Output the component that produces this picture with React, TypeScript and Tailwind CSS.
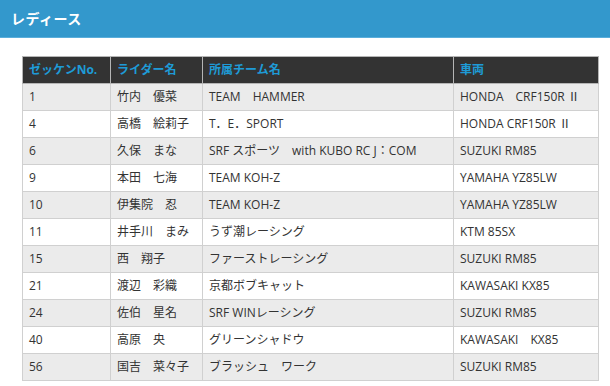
import React from "react";

const rows: [string, string, string, string][] = [
  ["1", "竹内　優菜", "TEAM　HAMMER", "HONDA　CRF150R Ⅱ"],
  ["4", "高橋　絵莉子", "T．E．SPORT", "HONDA CRF150R Ⅱ"],
  ["6", "久保　まな", "SRF スポーツ　with KUBO RC J：COM", "SUZUKI RM85"],
  ["9", "本田　七海", "TEAM KOH-Z", "YAMAHA YZ85LW"],
  ["10", "伊集院　忍", "TEAM KOH-Z", "YAMAHA YZ85LW"],
  ["11", "井手川　まみ", "うず潮レーシング", "KTM 85SX"],
  ["15", "西　翔子", "ファーストレーシング", "SUZUKI RM85"],
  ["21", "渡辺　彩織", "京都ボブキャット", "KAWASAKI KX85"],
  ["24", "佐伯　星名", "SRF WINレーシング", "SUZUKI RM85"],
  ["40", "高原　央", "グリーンシャドウ", "KAWASAKI　KX85"],
  ["56", "国吉　菜々子", "ブラッシュ　ワーク", "SUZUKI RM85"],
];

export default function App() {
  return (
    <div
      className="w-[610px] h-[386px] bg-white overflow-hidden"
      style={{ fontFamily: "'Open Sans', 'Noto Sans CJK JP', sans-serif" }}
    >
      <div className="h-[38px] bg-[#3398cc] border-b border-[#5aaedb] flex items-center pl-[11px]">
        <h1 className="text-white font-bold text-[14px] tracking-[0.5px]">レディース</h1>
      </div>
      <div className="pt-[18px] pl-[22px]">
        <table className="border-collapse table-fixed w-[576px] text-[12px] text-[#333]">
          <colgroup>
            <col className="w-[88px]" />
            <col className="w-[92px]" />
            <col className="w-[251px]" />
            <col className="w-[145px]" />
          </colgroup>
          <thead>
            <tr className="bg-[#333333] h-[27px]">
              {["ゼッケンNo.", "ライダー名", "所属チーム名", "車両"].map((h) => (
                <th
                  key={h}
                  className="text-left font-bold text-[#1e9bd7] px-[6px] border border-[#b5b5b5] p-0 leading-none"
                >
                  {h}
                </th>
              ))}
            </tr>
          </thead>
          <tbody>
            {rows.map((r, i) => (
              <tr key={i} className={`h-[27px] ${i % 2 === 0 ? "bg-[#ebebeb]" : "bg-white"}`}>
                {r.map((c, j) => (
                  <td
                    key={j}
                    className="px-[6px] border border-[#d0d0d0] whitespace-nowrap leading-none"
                  >
                    {c}
                  </td>
                ))}
              </tr>
            ))}
          </tbody>
        </table>
      </div>
    </div>
  );
}
